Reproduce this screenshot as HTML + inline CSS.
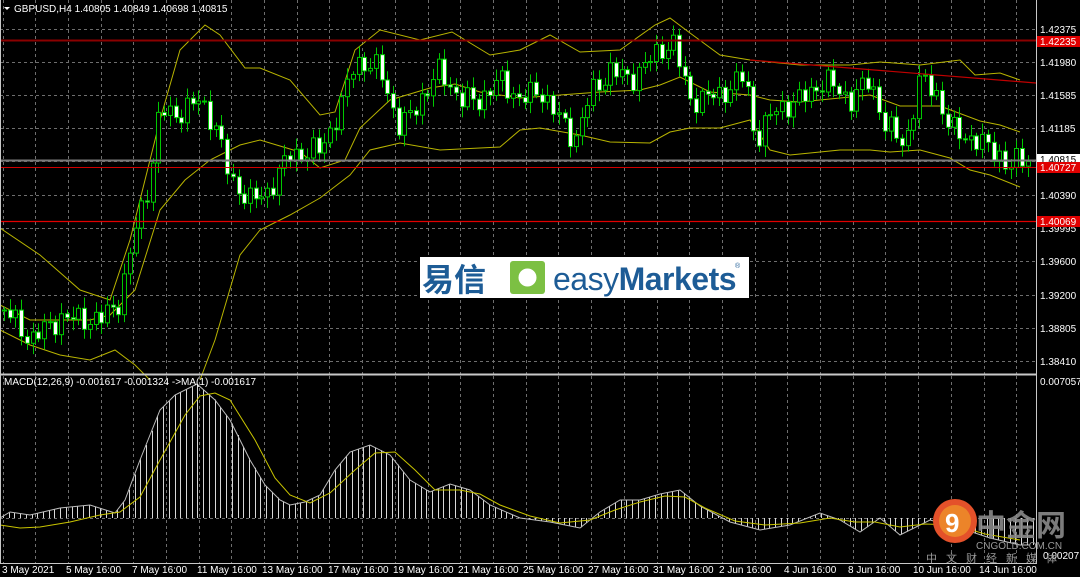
<!DOCTYPE html>
<html><head><meta charset="utf-8"><style>
html,body{margin:0;padding:0;background:#000;width:1080px;height:577px;overflow:hidden}
svg{display:block}
text{font-family:"Liberation Sans",sans-serif;font-size:10px;fill:#fff}
</style></head><body>
<svg id="s" width="1080" height="577" xmlns="http://www.w3.org/2000/svg">
<rect width="1080" height="577" fill="#000"/>
<g id="grid" stroke="#6e6e6e" stroke-width="1" stroke-dasharray="3,3"></g>
<g id="bands" fill="none" stroke="#b8b400" stroke-width="1"></g>
<g id="candles"></g>
<g id="macd"></g>
<line x1="0" y1="40.5" x2="1036" y2="40.5" stroke="#8b0000" stroke-width="2"/>
<line x1="0" y1="160.5" x2="1036" y2="160.5" stroke="#7a7a7a" stroke-width="2"/>
<line x1="0" y1="167.5" x2="1036" y2="167.5" stroke="#d00000"/>
<line x1="0" y1="221.5" x2="1036" y2="221.5" stroke="#e00000" stroke-width="1.3"/>
<line x1="750" y1="60" x2="1036" y2="83" stroke="#c00000" stroke-width="1.2"/>
<line x1="1036.5" y1="0" x2="1036.5" y2="564" stroke="#c8c8c8"/>
<line x1="0" y1="374.5" x2="1036" y2="374.5" stroke="#c8c8c8" stroke-width="2"/>
<line x1="0" y1="563.5" x2="1036" y2="563.5" stroke="#c8c8c8"/>
<line x1="0.5" y1="0" x2="0.5" y2="564" stroke="#c8c8c8"/>
<path d="M4 7 L10 7 L7 10 Z" fill="#fff"/>
<text x="14" y="12">GBPUSD,H4  1.40805 1.40849 1.40698 1.40815</text>
<text x="4" y="385">MACD(12,26,9) -0.001617 -0.001324  -&gt;MA(1) -0.001617</text>
<g id="axis"></g>
<rect x="1037" y="36" width="43" height="11" fill="#e00000"/><text x="1040" y="45">1.42235</text>
<rect x="1037" y="154" width="43" height="11" fill="#fff"/><text x="1040" y="163" style="fill:#000">1.40815</text>
<rect x="1037" y="162" width="43" height="11" fill="#e00000"/><text x="1040" y="171">1.40727</text>
<rect x="1037" y="216" width="43" height="11" fill="#e00000"/><text x="1040" y="225">1.40069</text>
<text x="1040" y="385">0.007057</text>
<text x="1043" y="559">0.00207</text>
<g id="time"></g>
<rect x="420" y="257" width="329" height="41" fill="#fff"/>
<text x="422" y="291" style="font-family:'Noto Sans CJK SC',sans-serif;font-size:32px;fill:#1d5c96;font-weight:bold">易信</text>
<rect x="510" y="261" width="35" height="33" rx="3" fill="#7cc043"/>
<circle cx="527.5" cy="277.5" r="9" fill="#fff"/>
<text x="553" y="290" style="font-size:32px;fill:#1d5c96;letter-spacing:-0.5px">easy<tspan style="font-weight:bold">Markets</tspan></text>
<text x="735" y="268" style="font-size:7px;fill:#1d5c96">®</text>
<circle cx="955" cy="521" r="22" fill="#e4512a"/>
<circle cx="955" cy="521" r="16" fill="#f09a2a" opacity="0.7"/>
<text x="945" y="532" style="font-size:26px;font-weight:bold;fill:#fff">9</text>
<text x="976" y="536" style="font-family:'Noto Sans CJK SC',sans-serif;font-size:30px;fill:#8a8a8a;font-weight:bold;opacity:0.9">中金网</text>
<text x="976" y="549" style="font-size:10px;fill:#9a9a9a">CNGOLD.COM.CN</text>
<text x="926" y="562" style="font-family:'Noto Sans CJK SC',sans-serif;font-size:11px;fill:#9a9a9a;letter-spacing:9px">中文财经新媒体</text>
</svg>
<script>
(function(){
var NS="http://www.w3.org/2000/svg";
function el(p,t,a,txt){var e=document.createElementNS(NS,t);for(var k in a)e.setAttribute(k,a[k]);if(txt)e.textContent=txt;document.getElementById(p).appendChild(e);return e;}
for(var x=2.5;x<1036;x+=32.7){el('grid','line',{x1:Math.round(x)+.5,y1:0,x2:Math.round(x)+.5,y2:374});el('grid','line',{x1:Math.round(x)+.5,y1:376,x2:Math.round(x)+.5,y2:563});}
var ys=[29,62,95,128,161,195,228,261,295,328,361];
var labs=["1.42375","1.41980","1.41585","1.41185","","1.40390","1.39995","1.39600","1.39200","1.38805","1.38410"];
for(var i=0;i<ys.length;i++){el('grid','line',{x1:0,y1:ys[i]+.5,x2:1036,y2:ys[i]+.5});if(labs[i])el('axis','text',{x:1040,y:ys[i]+4},labs[i]);}
el('grid','line',{x1:0,y1:518.5,x2:1036,y2:518.5});
function interp(pts,x){for(var i=0;i<pts.length-1;i++){if(x>=pts[i][0]&&x<=pts[i+1][0]){var t=(x-pts[i][0])/(pts[i+1][0]-pts[i][0]);return pts[i][1]+t*(pts[i+1][1]-pts[i][1]);}}return x<pts[0][0]?pts[0][1]:pts[pts.length-1][1];}
function poly(g,pts,stroke,w){var d=pts.map(function(p){return p[0]+","+p[1]}).join(" ");el(g,'polyline',{points:d,stroke:stroke,'stroke-width':w||1,fill:'none'});}
var upper=[[0,228],[40,255],[80,290],[110,300],[130,240],[160,120],[180,50],[205,25],[220,35],[245,68],[260,68],[290,80],[320,115],[335,112],[355,50],[380,30],[420,40],[452,32],[490,55],[520,50],[550,35],[580,52],[620,50],[655,25],[670,18],[690,33],[720,55],[750,60],[800,65],[850,65],[880,62],[920,65],[960,60],[975,75],[1000,73],[1020,80]];
var mid=[[0,305],[30,320],[60,320],[90,320],[110,315],[135,290],[160,210],[185,180],[210,160],[240,145],[260,140],[300,152],[320,168],[345,160],[360,128],[390,100],[430,88],[455,84],[480,92],[520,98],[560,95],[600,92],[640,90],[660,85],[680,77],[710,92],[750,95],[770,100],[800,102],[840,98],[870,95],[900,106],[940,106],[980,121],[1000,125],[1020,132]];
var lower=[[0,330],[30,345],[60,355],[90,360],[115,350],[135,365],[150,380]];
var lower2=[[200,380],[215,340],[240,255],[260,230],[290,215],[320,198],[350,175],[370,150],[400,143],[440,150],[480,148],[500,147],[520,130],[540,128],[580,135],[610,142],[650,143],[670,132],[690,128],[720,128],[750,120],[770,150],[790,155],[810,153],[840,150],[870,150],[890,152],[920,150],[950,158],[970,170],[990,175],[1020,187]];
poly('bands',upper,'#b8b400');poly('bands',mid,'#b8b400');poly('bands',lower,'#b8b400');poly('bands',lower2,'#b8b400');
var path=[[5,310],[30,340],[60,318],[100,320],[120,300],[135,230],[150,180],[160,110],[175,115],[200,100],[215,125],[230,180],[250,200],[265,195],[290,155],[320,150],[340,110],[355,60],[380,70],[400,130],[420,100],[440,70],[460,100],[480,100],[500,80],[520,100],[540,90],[560,120],[575,140],[590,95],[610,70],[630,80],[650,60],[672,40],[690,100],[720,95],[745,75],[755,140],[775,110],[800,100],[825,80],[850,100],[870,80],[885,125],[905,145],[920,80],[935,90],[950,130],[975,140],[1000,155],[1008,170],[1020,158]];
var prev=interp(path,0);
for(var i=0;i<180;i++){var x=4+i*5.72;if(x>1030)break;
 var c=interp(path,x)+9*Math.sin(i*2.3)+5*Math.sin(i*5.1);
 var o=prev;prev=c;
 var hi=Math.min(o,c)-3-Math.abs(8*Math.sin(i*1.7));var lo=Math.max(o,c)+3+Math.abs(8*Math.cos(i*1.3));
 var xx=Math.round(x)+.5;
 el('candles','line',{x1:xx,y1:hi,x2:xx,y2:lo,stroke:'#00c800'});
 var bt=Math.min(o,c),h=Math.max(1,Math.abs(o-c));
 el('candles','rect',{x:xx-2,y:bt,width:4,height:h,fill:(c>o?'#fff':'#000'),stroke:'#00c800','stroke-width':1});
}
var m=[[0,518],[10,512],[30,515],[60,508],[90,505],[115,513],[125,500],[140,460],[160,410],[175,395],[197,384],[215,400],[230,420],[250,460],[265,485],[280,500],[290,505],[305,502],[320,495],[335,470],[350,452],[370,445],[390,455],[410,480],[430,492],[450,484],[470,490],[490,505],[520,518],[550,522],[580,528],[600,512],[620,500],[640,500],[660,494],[680,490],[700,506],[730,522],[760,530],[790,525],[820,513],[840,520],[860,532],[880,518],[900,535],[930,520],[960,528],[990,538],[1020,545],[1030,545]];
var sig=[[0,525],[20,528],[40,527],[70,522],[100,515],[120,512],[140,497],[160,460],[185,415],[200,396],[215,393],[230,400],[255,440],[275,478],[290,495],[310,503],[330,493],[355,470],[375,453],[395,452],[415,470],[435,490],[460,490],[480,494],[500,505],[530,516],[560,523],[590,520],[615,510],[640,502],[665,496],[685,497],[705,508],[735,521],[765,525],[800,523],[830,518],[855,522],[875,522],[900,527],[925,524],[955,525],[985,534],[1020,540]];
for(var x=3;x<1033;x+=5.72){var y=interp(m,x);var xx=Math.round(x)+.5;el('macd','line',{x1:xx,y1:518,x2:xx,y2:y,stroke:'#d8d8d8','stroke-width':1});}
poly('macd',m,'#bdbdbd');poly('macd',sig,'#c8c400');
var tl=[["3 May 2021",2],["5 May 16:00",66],["7 May 16:00",132],["11 May 16:00",197],["13 May 16:00",262],["17 May 16:00",328],["19 May 16:00",393],["21 May 16:00",458],["25 May 16:00",523],["27 May 16:00",588],["31 May 16:00",653],["2 Jun 16:00",719],["4 Jun 16:00",784],["8 Jun 16:00",848],["10 Jun 16:00",913],["14 Jun 16:00",979]];
tl.forEach(function(t){el('time','text',{x:t[1],y:573},t[0]);});
})();
</script>
</body></html>
